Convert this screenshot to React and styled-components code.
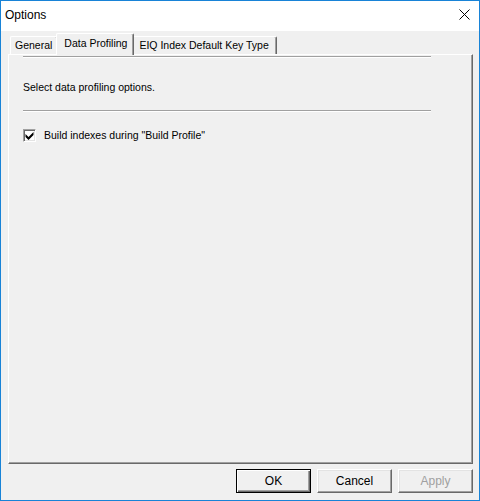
import React from "react";
import styled, { createGlobalStyle } from "styled-components";

const Global = createGlobalStyle`
  html, body { margin: 0; padding: 0; background: #f0f0f0; }
  body { font-family: "Liberation Sans", Arial, sans-serif; }
  * { box-sizing: border-box; }
`;

const Window = styled.div`
  width: 480px;
  height: 501px;
  border: 1px solid #1883d7;
  display: flex;
  flex-direction: column;
  background: #f0f0f0;
`;

const TitleBar = styled.div`
  height: 30px;
  background: #ffffff;
  display: flex;
  align-items: center;
  justify-content: space-between;
  padding: 0 9px 3px 4px;
  font-size: 12px;
  color: #000;
`;

const Body = styled.div`
  flex: 1;
  display: flex;
  flex-direction: column;
  padding: 2px 6px 7px 7px;
  font-size: 10.5px;
  color: #000;
`;

const TabStrip = styled.div`
  display: flex;
  align-items: flex-end;
  height: 21px;
  padding-left: 2px;
  position: relative;
  z-index: 1;
`;

const Tab = styled.div`
  height: ${(p) => (p.$active ? "22px" : "18px")};
  margin: ${(p) => (p.$active ? "0 -2px -1px -2px" : "0")};
  padding: ${(p) => (p.$active ? "2px 6px 0 7px" : p.$wide ? "1px 7px 0 6px" : "1px 5px 0 4px")};
  background: #f0f0f0;
  border-top: 1px solid #ffffff;
  border-left: 1px solid #ffffff;
  border-right: 1px solid #696969;
  box-shadow: inset -1px 0 0 #a0a0a0;
  border-top-left-radius: 2px;
  border-top-right-radius: 2px;
  white-space: nowrap;
  line-height: 14px;
  position: relative;
  z-index: ${(p) => (p.$active ? 2 : 1)};
`;

const Panel = styled.div`
  flex: 1;
  border-top: 1px solid #ffffff;
  border-left: 1px solid #ffffff;
  border-right: 1px solid #696969;
  border-bottom: 1px solid #696969;
  box-shadow: inset -1px -1px 0 #a0a0a0;
  padding: 1px 0 0 14px;
  display: flex;
  flex-direction: column;
  align-items: flex-start;
`;

const Separator = styled.div`
  width: 408px;
  height: 2px;
  border-top: 1px solid #a0a0a0;
  border-bottom: 1px solid #ffffff;
  margin-top: ${(p) => p.$top || 0}px;
`;

const Caption = styled.div`
  margin-top: 23px;
  line-height: 13px;
  height: 13px;
`;

const CheckRow = styled.label`
  display: flex;
  align-items: center;
  gap: 8px;
  margin-top: 17px;
  line-height: 13px;
`;

const CheckBox = styled.span`
  width: 13px;
  height: 13px;
  background: #ffffff;
  border-top: 1px solid #a0a0a0;
  border-left: 1px solid #a0a0a0;
  border-right: 1px solid #ffffff;
  border-bottom: 1px solid #ffffff;
  box-shadow: inset 1px 1px 0 #696969, inset -1px -1px 0 #e3e3e3;
  display: flex;
  align-items: center;
  justify-content: center;
`;

const ButtonRow = styled.div`
  display: flex;
  justify-content: flex-end;
  gap: 6px;
  padding-top: 5px;
`;

const Button = styled.div`
  width: 75px;
  height: 24px;
  display: flex;
  align-items: center;
  justify-content: center;
  font-size: 12px;
  color: ${(p) => (p.$disabled ? "#a0a0a0" : "#000")};
  background: #f0f0f0;
  border: 1px solid;
  border-color: ${(p) =>
    p.$default ? "#000" : "#ffffff #696969 #696969 #ffffff"};
  box-shadow: ${(p) =>
    p.$default
      ? "inset 1px 1px 0 #ffffff, inset -1px -1px 0 #696969, inset -2px -2px 0 #a0a0a0"
      : "inset -1px -1px 0 #a0a0a0, inset 1px 1px 0 #e3e3e3"};
`;

const Close = () => (
  <svg width="11" height="11" viewBox="0 0 11 11">
    <path d="M0.5 0.5 L10.5 10.5 M10.5 0.5 L0.5 10.5" stroke="#000" strokeWidth="1" />
  </svg>
);

const Check = () => (
  <svg width="9" height="9" viewBox="0 0 9 9">
    <path d="M0.5 3 L3.5 6 L8.5 1 L8.5 4 L3.5 9 L0.5 6 Z" fill="#000" />
  </svg>
);

export default function App() {
  return (
    <>
      <Global />
      <Window>
        <TitleBar>
          <span>Options</span>
          <Close />
        </TitleBar>
        <Body>
          <TabStrip>
            <Tab>General</Tab>
            <Tab $active>Data Profiling</Tab>
            <Tab $wide>EIQ Index Default Key Type</Tab>
          </TabStrip>
          <Panel>
            <Separator $top={0} />
            <Caption>Select data profiling options.</Caption>
            <Separator $top={16} />
            <CheckRow>
              <CheckBox>
                <Check />
              </CheckBox>
              <span>Build indexes during "Build Profile"</span>
            </CheckRow>
          </Panel>
          <ButtonRow>
            <Button $default>OK</Button>
            <Button>Cancel</Button>
            <Button $disabled>Apply</Button>
          </ButtonRow>
        </Body>
      </Window>
    </>
  );
}
